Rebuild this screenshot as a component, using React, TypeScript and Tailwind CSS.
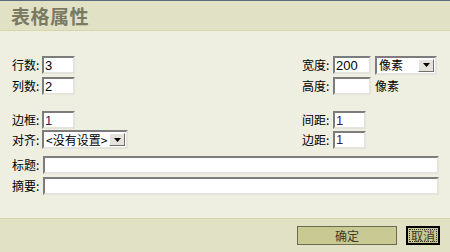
import React from "react";

const F = { fontFamily: '"Noto Sans CJK SC", "Liberation Sans", sans-serif' };
const inset =
  "bg-white border-2 border-t-[#7c7c7c] border-l-[#7c7c7c] border-b-[#e4e4dc] border-r-[#e4e4dc] box-border";

function Input({ w, value, color = "#000" }: { w: string; value?: string; color?: string }) {
  return (
    <div
      className={`${inset} ${w} h-[18px] flex items-center pl-[1px] text-[13px] leading-none`}
      style={{ fontFamily: '"Liberation Sans", "DejaVu Sans", sans-serif', color }}
    >
      {value}
    </div>
  );
}

function Select({ w, h, text }: { w: string; h: string; text: string }) {
  return (
    <div className={`${inset} ${w} ${h} flex items-stretch text-[12px] leading-none`}>
      <div className="flex-1 flex items-center pl-[2px] text-black whitespace-nowrap overflow-hidden">{text}</div>
      <div className="w-[16px] m-[1px] bg-[#e4e2da] border border-t-white border-l-white border-b-[#707070] border-r-[#707070] flex items-center justify-center">
        <svg width="7" height="4" viewBox="0 0 7 4">
          <path d="M0 0h7L3.5 4z" fill="#000" />
        </svg>
      </div>
    </div>
  );
}

function Label({ children }: { children: React.ReactNode }) {
  return <span className="w-[30px] text-[12px] leading-none text-black whitespace-nowrap">{children}</span>;
}

export default function App() {
  return (
    <div className="w-[450px] h-[252px] flex flex-col bg-[#efefe1] overflow-hidden" style={F}>
      <div className="h-[31px] shrink-0 bg-[#e1e1c6] border-t border-t-[#5e6b7a] border-b border-b-[#d6d6a8] flex items-center pl-[11px]">
        <span className="text-[19px] font-bold text-[#7a7a63] tracking-[0.5px] leading-none">表格属性</span>
      </div>

      <div className="flex-1 flex flex-col pl-[12px] pt-[25px]">
        <div className="flex items-center h-[18px]">
          <div className="flex items-center w-[290px]">
            <Label>行数:</Label>
            <Input w="w-[33px]" value="3" />
          </div>
          <div className="flex items-center">
            <Label>宽度:</Label>
            <div className="ml-[1px]"><Input w="w-[38px]" value="200" /></div>
            <div className="ml-[4px]"><Select w="w-[62px]" h="h-[19px]" text="像素" /></div>
          </div>
        </div>
        <div className="flex items-center h-[18px] mt-[3px]">
          <div className="flex items-center w-[290px]">
            <Label>列数:</Label>
            <Input w="w-[33px]" value="2" />
          </div>
          <div className="flex items-center">
            <Label>高度:</Label>
            <div className="ml-[1px]"><Input w="w-[38px]" /></div>
            <span className="ml-[4px] text-[12px] leading-none text-black">像素</span>
          </div>
        </div>

        <div className="flex items-center h-[18px] mt-[16px]">
          <div className="flex items-center w-[290px]">
            <Label>边框:</Label>
            <Input w="w-[33px]" value="1" color="#3a1a5a" />
          </div>
          <div className="flex items-center">
            <Label>间距:</Label>
            <div className="ml-[1px]"><Input w="w-[33px]" value="1" color="#3a1a5a" /></div>
          </div>
        </div>
        <div className="flex items-center h-[19px] mt-[1px]">
          <div className="flex items-center w-[290px]">
            <Label>对齐:</Label>
            <Select w="w-[86px]" h="h-[19px]" text="<没有设置>" />
          </div>
          <div className="flex items-center">
            <Label>边距:</Label>
            <div className="ml-[1px]"><Input w="w-[33px]" value="1" color="#3a1a5a" /></div>
          </div>
        </div>

        <div className="flex items-center h-[18px] mt-[7px]">
          <Label>标题:</Label>
          <div className={`${inset} ml-[1px] w-[396px] h-[18px]`} />
        </div>
        <div className="flex items-center h-[18px] mt-[3px]">
          <Label>摘要:</Label>
          <div className={`${inset} ml-[1px] w-[396px] h-[18px]`} />
        </div>
      </div>

      <div className="h-[34px] shrink-0 bg-[#e1e1c6] border-t border-t-[#d6d6a8] flex items-start justify-end pr-[10px] pt-[7px] gap-[9px]">
        <button className="w-[100px] h-[19px] bg-[#c9c993] border border-[#6b6b4e] text-[12px] leading-none text-[#3a3a28] flex items-center justify-center">
          确定
        </button>
        <button className="w-[34px] h-[19px] bg-[#c9c993] border-2 border-black text-[12px] leading-none text-[#3a3a28] flex items-center justify-center p-[1px]">
          <span className="w-full h-full border border-dotted border-[#333] flex items-center justify-center">取消</span>
        </button>
      </div>
    </div>
  );
}
